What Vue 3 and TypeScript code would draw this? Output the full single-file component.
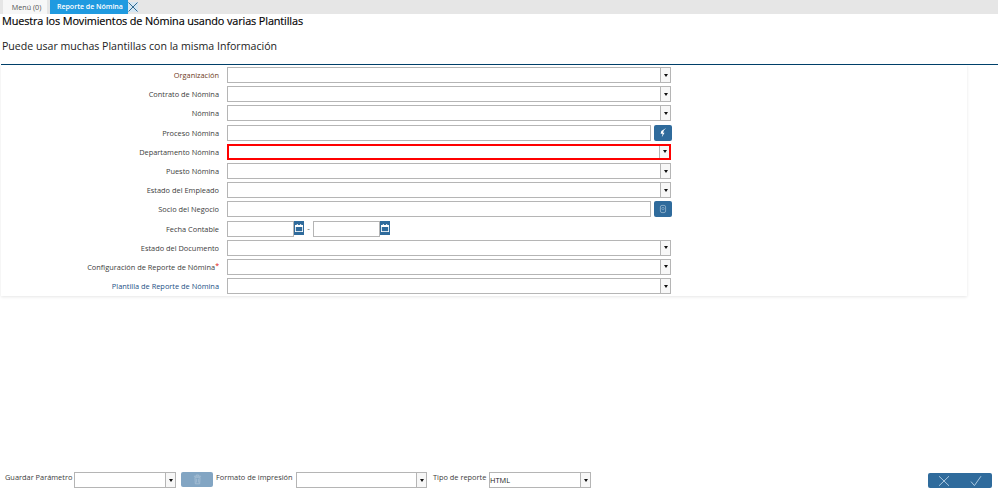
<template>
  <div class="page">
    <div class="tabbar">
      <div class="tab">Menú (0)</div>
      <div class="tab active">
        <span>Reporte de Nómina</span>
      </div>
      <svg class="tab-close" viewBox="0 0 10 10" width="10" height="10">
        <path d="M0.5 0.5 9.5 9.5M9.5 0.5 0.5 9.5" stroke="#1d5a85" stroke-width="0.9" fill="none" />
      </svg>
    </div>

    <div class="head">
      <h1 class="title">Muestra los Movimientos de Nómina usando varias Plantillas</h1>
      <p class="help">Puede usar muchas Plantillas con la misma Información</p>
    </div>

    <div class="panel">
      <div v-for="row in rows" :key="row.label" class="row">
        <label class="label" :class="row.tone">
          {{ row.label }}<span v-if="row.required" class="req">*</span>
        </label>

        <div v-if="row.kind === 'combo'" class="combo" :class="{ error: row.error }">
          <div class="combo-input"></div>
          <div class="combo-arrow"><i class="caret"></i></div>
        </div>

        <div v-else-if="row.kind === 'search'" class="search">
          <div class="text-input"></div>
          <button class="icon-btn">
            <svg v-if="row.icon === 'bolt'" viewBox="0 0 10 10" width="11" height="11">
              <path d="M7.4 0.8 3 3.6 2.4 6.2h1.8L3.4 9.4 6 5.2H4.6L5.4 3z" fill="#fff" />
            </svg>
            <svg v-else viewBox="0 0 10 10" width="10" height="10">
              <rect x="2.4" y="1.4" width="5.2" height="7.2" rx="1.6" fill="none" stroke="#8fb0cb" stroke-width="0.9" />
              <circle cx="5" cy="4.6" r="1.2" fill="none" stroke="#8fb0cb" stroke-width="0.7" />
            </svg>
          </button>
        </div>

        <div v-else class="dates">
          <div class="date">
            <div class="date-input"></div>
            <div class="date-btn">
              <svg viewBox="0 0 10 10" width="10" height="10">
                <path d="M1 2h8v7H1z" fill="#fff" />
                <path d="M1.8 4h6.4v4.2H1.8z" fill="#2f6b9c" />
                <path d="M2.8 1h1v2h-1zM6.2 1h1v2h-1z" fill="#fff" />
              </svg>
            </div>
          </div>
          <span class="dash">-</span>
          <div class="date">
            <div class="date-input"></div>
            <div class="date-btn">
              <svg viewBox="0 0 10 10" width="10" height="10">
                <path d="M1 2h8v7H1z" fill="#fff" />
                <path d="M1.8 4h6.4v4.2H1.8z" fill="#2f6b9c" />
                <path d="M2.8 1h1v2h-1zM6.2 1h1v2h-1z" fill="#fff" />
              </svg>
            </div>
          </div>
        </div>
      </div>
    </div>

    <div class="footer">
      <div class="footer-left">
        <span class="foot-label first">Guardar Parámetro</span>
        <div class="combo foot-combo w-save">
          <div class="combo-input"></div>
          <div class="combo-arrow"><i class="caret"></i></div>
        </div>
        <button class="trash">
          <svg viewBox="0 0 10 12" width="9" height="11">
            <path d="M1 2.4h8M3.6 2.2V1h2.8v1.2" stroke="#a9c1d6" stroke-width="0.9" fill="none" />
            <path d="M2.2 3.6h5.6l-.4 7.2H2.6z" fill="none" stroke="#a9c1d6" stroke-width="0.9" />
            <path d="M4 5v4.4M6 5v4.4" stroke="#a9c1d6" stroke-width="0.8" />
          </svg>
        </button>
        <span class="foot-label fmt">Formato de impresión</span>
        <div class="combo foot-combo w-format">
          <div class="combo-input"></div>
          <div class="combo-arrow"><i class="caret"></i></div>
        </div>
        <span class="foot-label kind">Tipo de reporte</span>
        <div class="combo foot-combo w-kind">
          <div class="combo-input value">HTML</div>
          <div class="combo-arrow"><i class="caret"></i></div>
        </div>
      </div>
      <div class="actions">
        <button class="action">
          <svg viewBox="0 0 12 12" width="12" height="12">
            <path d="M1 1.2 11 10.8M11 1.2 1 10.8" stroke="#a9c8e0" stroke-width="1" fill="none" />
          </svg>
        </button>
        <button class="action">
          <svg viewBox="0 0 12 12" width="12" height="12">
            <path d="M1 6.6 4.4 10.6 11 1.2" stroke="#a9c8e0" stroke-width="1" fill="none" />
          </svg>
        </button>
      </div>
    </div>
  </div>
</template>

<script setup lang="ts">
interface Row {
  label: string
  kind: 'combo' | 'search' | 'dates'
  tone?: 'warm' | 'blue'
  icon?: 'bolt' | 'person'
  required?: boolean
  error?: boolean
}

const rows: Row[] = [
  { label: 'Organización', kind: 'combo', tone: 'warm' },
  { label: 'Contrato de Nómina', kind: 'combo' },
  { label: 'Nómina', kind: 'combo' },
  { label: 'Proceso Nómina', kind: 'search', icon: 'bolt' },
  { label: 'Departamento Nómina', kind: 'combo', error: true },
  { label: 'Puesto Nómina', kind: 'combo' },
  { label: 'Estado del Empleado', kind: 'combo' },
  { label: 'Socio del Negocio', kind: 'search', icon: 'person' },
  { label: 'Fecha Contable', kind: 'dates' },
  { label: 'Estado del Documento', kind: 'combo' },
  { label: 'Configuración de Reporte de Nómina', kind: 'combo', required: true },
  { label: 'Plantilla de Reporte de Nómina', kind: 'combo', tone: 'blue' }
]
</script>

<style>
html,
body {
  margin: 0;
  background: #fff;
}
</style>

<style scoped>
.page {
  width: 998px;
  height: 488px;
  display: flex;
  flex-direction: column;
  overflow: hidden;
  font-family: 'Open Sans', sans-serif;
  color: #333;
}

/* Tabs */
.tabbar {
  height: 14px;
  flex: none;
  display: flex;
  align-items: center;
  padding-left: 3px;
  background: #e6e6e6;
}

.tab {
  width: 44px;
  height: 14px;
  margin-right: 3px;
  padding-left: 3px;
  box-sizing: border-box;
  background: #f7f7f7;
  font-size: 7.2px;
  line-height: 14px;
  text-align: center;
  color: #555;
  white-space: nowrap;
}

.tab.active {
  width: 78px;
  margin-right: 0;
  padding-left: 7px;
  background: #1f9ae0;
  color: #fff;
  font-weight: 600;
  font-size: 7px;
  text-align: left;
}

.tab-close {
  flex: none;
  background: #d5e6f2;
}

/* Heading */
.head {
  flex: none;
  height: 51px;
  margin-left: 1px;
  padding-left: 1px;
  border-bottom: 1px solid #00416b;
  box-sizing: border-box;
}

.title {
  margin: 0;
  font-size: 10.9px;
  font-weight: 500;
  letter-spacing: -0.13px;
  line-height: 14px;
  color: #000;
  -webkit-text-stroke: 0.15px #000;
}

.help {
  margin: 11px 0 0;
  font-size: 10.6px;
  line-height: 15px;
  color: #222;
}

/* Form */
.panel {
  width: 966px;
  height: 231px;
  flex: none;
  margin-left: 1px;
  padding-top: 0.5px;
  box-sizing: border-box;
  box-shadow: 0 1px 3px rgba(0, 0, 0, 0.1);
}

.row {
  height: 19.2px;
  display: grid;
  grid-template-columns: 218px 1fr;
  column-gap: 8px;
  align-items: center;
}

.label {
  font-size: 7.4px;
  text-align: right;
  color: #3c3c3c;
  white-space: nowrap;
}

.label.warm {
  color: #6e3a20;
}

.label.blue {
  color: #1c4f86;
}

.req {
  color: #e01010;
  vertical-align: 2px;
  font-size: 7px;
}

.combo {
  width: 444px;
  height: 16px;
  display: flex;
  box-sizing: border-box;
  border: 1px solid #b5b5b5;
  background: #fff;
}

.combo.error {
  border: 2px solid #f00;
}

.combo-input {
  flex: 1;
  min-width: 0;
}

.combo-input.value {
  font-size: 7.4px;
  line-height: 15px;
  color: #222;
}

.combo-arrow {
  width: 9px;
  flex: none;
  display: flex;
  align-items: center;
  justify-content: center;
  border-left: 1px solid #b5b5b5;
  background: #f7f7f7;
}

.caret {
  width: 0;
  height: 0;
  border-left: 2.5px solid transparent;
  border-right: 2.5px solid transparent;
  border-top: 3px solid #111;
}

.search {
  display: flex;
  align-items: center;
  gap: 3px;
}

.text-input {
  width: 424px;
  height: 16px;
  box-sizing: border-box;
  border: 1px solid #b5b5b5;
}

.icon-btn {
  width: 18px;
  height: 16px;
  padding: 0;
  border: none;
  border-radius: 2px;
  background: #2f6b9c;
  display: flex;
  align-items: center;
  justify-content: center;
}

.dates {
  display: flex;
  align-items: center;
}

.date {
  display: flex;
  align-items: flex-start;
}

.date-input {
  width: 67px;
  height: 16px;
  box-sizing: border-box;
  border: 1px solid #b5b5b5;
}

.date-btn {
  width: 10px;
  height: 14px;
  background: #2f6b9c;
  display: flex;
  align-items: center;
  justify-content: center;
}

.dash {
  width: 9px;
  font-size: 8px;
  text-align: center;
  color: #444;
  margin-top: -2px;
}

/* Footer */
.footer {
  flex: 1;
  display: flex;
  justify-content: space-between;
  align-items: flex-end;
  padding: 0 6px 0 5px;
}

.footer-left {
  display: flex;
  align-items: flex-start;
}

.foot-label {
  font-size: 7.4px;
  line-height: 11px;
  color: #3c3c3c;
  white-space: nowrap;
}

.first {
  width: 69px;
}

.foot-combo {
  height: 16px;
}

.w-save {
  width: 102px;
  margin-right: 5px;
}

.trash {
  width: 32px;
  height: 15px;
  margin-right: 3px;
  padding: 0;
  border: none;
  border-radius: 2px;
  background: #82a5c3;
  display: flex;
  align-items: center;
  justify-content: center;
}

.fmt {
  width: 80px;
}

.w-format {
  width: 131px;
  margin-right: 6px;
}

.kind {
  width: 56px;
}

.w-kind {
  width: 102px;
}

.actions {
  display: flex;
}

.action {
  width: 32px;
  height: 15px;
  padding: 0;
  border: none;
  background: #2f6b9c;
  display: flex;
  align-items: center;
  justify-content: center;
}

.action:first-child {
  border-radius: 2px 0 0 2px;
}

.action:last-child {
  border-radius: 0 2px 2px 0;
}
</style>
